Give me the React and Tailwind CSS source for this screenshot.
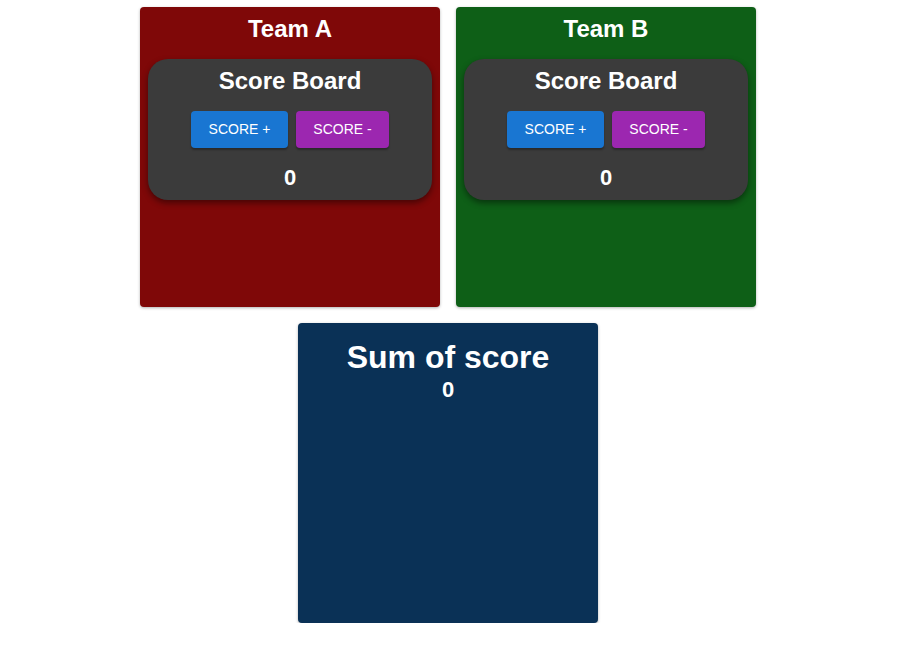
import React, { useState } from "react";

const ScoreBoard = ({ score, onAdd, onSub }) => {
  return (
    <div className="mx-2 mt-4 rounded-[20px] bg-[#3b3b3b] pt-2 pb-[9px] shadow-[0_3px_6px_rgba(0,0,0,0.45)]">
      <h3 className="text-center text-[24px] leading-[28px] font-bold text-white">Score Board</h3>
      <div className="mt-4 flex justify-center gap-2">
        <button
          onClick={onAdd}
          className="h-[37px] w-[97px] rounded bg-[#1976d2] text-[14px] uppercase text-white shadow-[0_2px_2px_rgba(0,0,0,0.3)]"
        >
          Score +
        </button>
        <button
          onClick={onSub}
          className="h-[37px] w-[93px] rounded bg-[#9c27b0] text-[14px] uppercase text-white shadow-[0_2px_2px_rgba(0,0,0,0.3)]"
        >
          Score -
        </button>
      </div>
      <p className="mt-[17px] text-center text-[22px] leading-[26px] font-bold text-white">{score}</p>
    </div>
  );
};

const TeamCard = ({ name, color, score, setScore }) => {
  return (
    <div className={`h-[300px] w-[300px] rounded ${color} pt-2 shadow-[0_1px_3px_rgba(0,0,0,0.3)]`}>
      <h2 className="text-center text-[24px] leading-[28px] font-bold text-white">{name}</h2>
      <ScoreBoard
        score={score}
        onAdd={() => setScore(score + 1)}
        onSub={() => setScore(score - 1)}
      />
    </div>
  );
};

export default function App() {
  const [a, setA] = useState(0);
  const [b, setB] = useState(0);

  return (
    <div className="w-[896px] pt-[7px] font-['Liberation_Sans',Arial,sans-serif]">
      <div className="flex justify-center gap-4">
        <TeamCard name="Team A" color="bg-[#7f0808]" score={a} setScore={setA} />
        <TeamCard name="Team B" color="bg-[#0e5f17]" score={b} setScore={setB} />
      </div>
      <div className="mt-4 flex justify-center">
        <div className="h-[300px] w-[300px] rounded bg-[#0a3156] pt-4 shadow-[0_1px_3px_rgba(0,0,0,0.3)]">
          <h1 className="text-center text-[32px] leading-[36px] font-bold text-white">Sum of score</h1>
          <p className="text-center text-[22px] leading-[30px] font-bold text-white">{a + b}</p>
        </div>
      </div>
    </div>
  );
}
